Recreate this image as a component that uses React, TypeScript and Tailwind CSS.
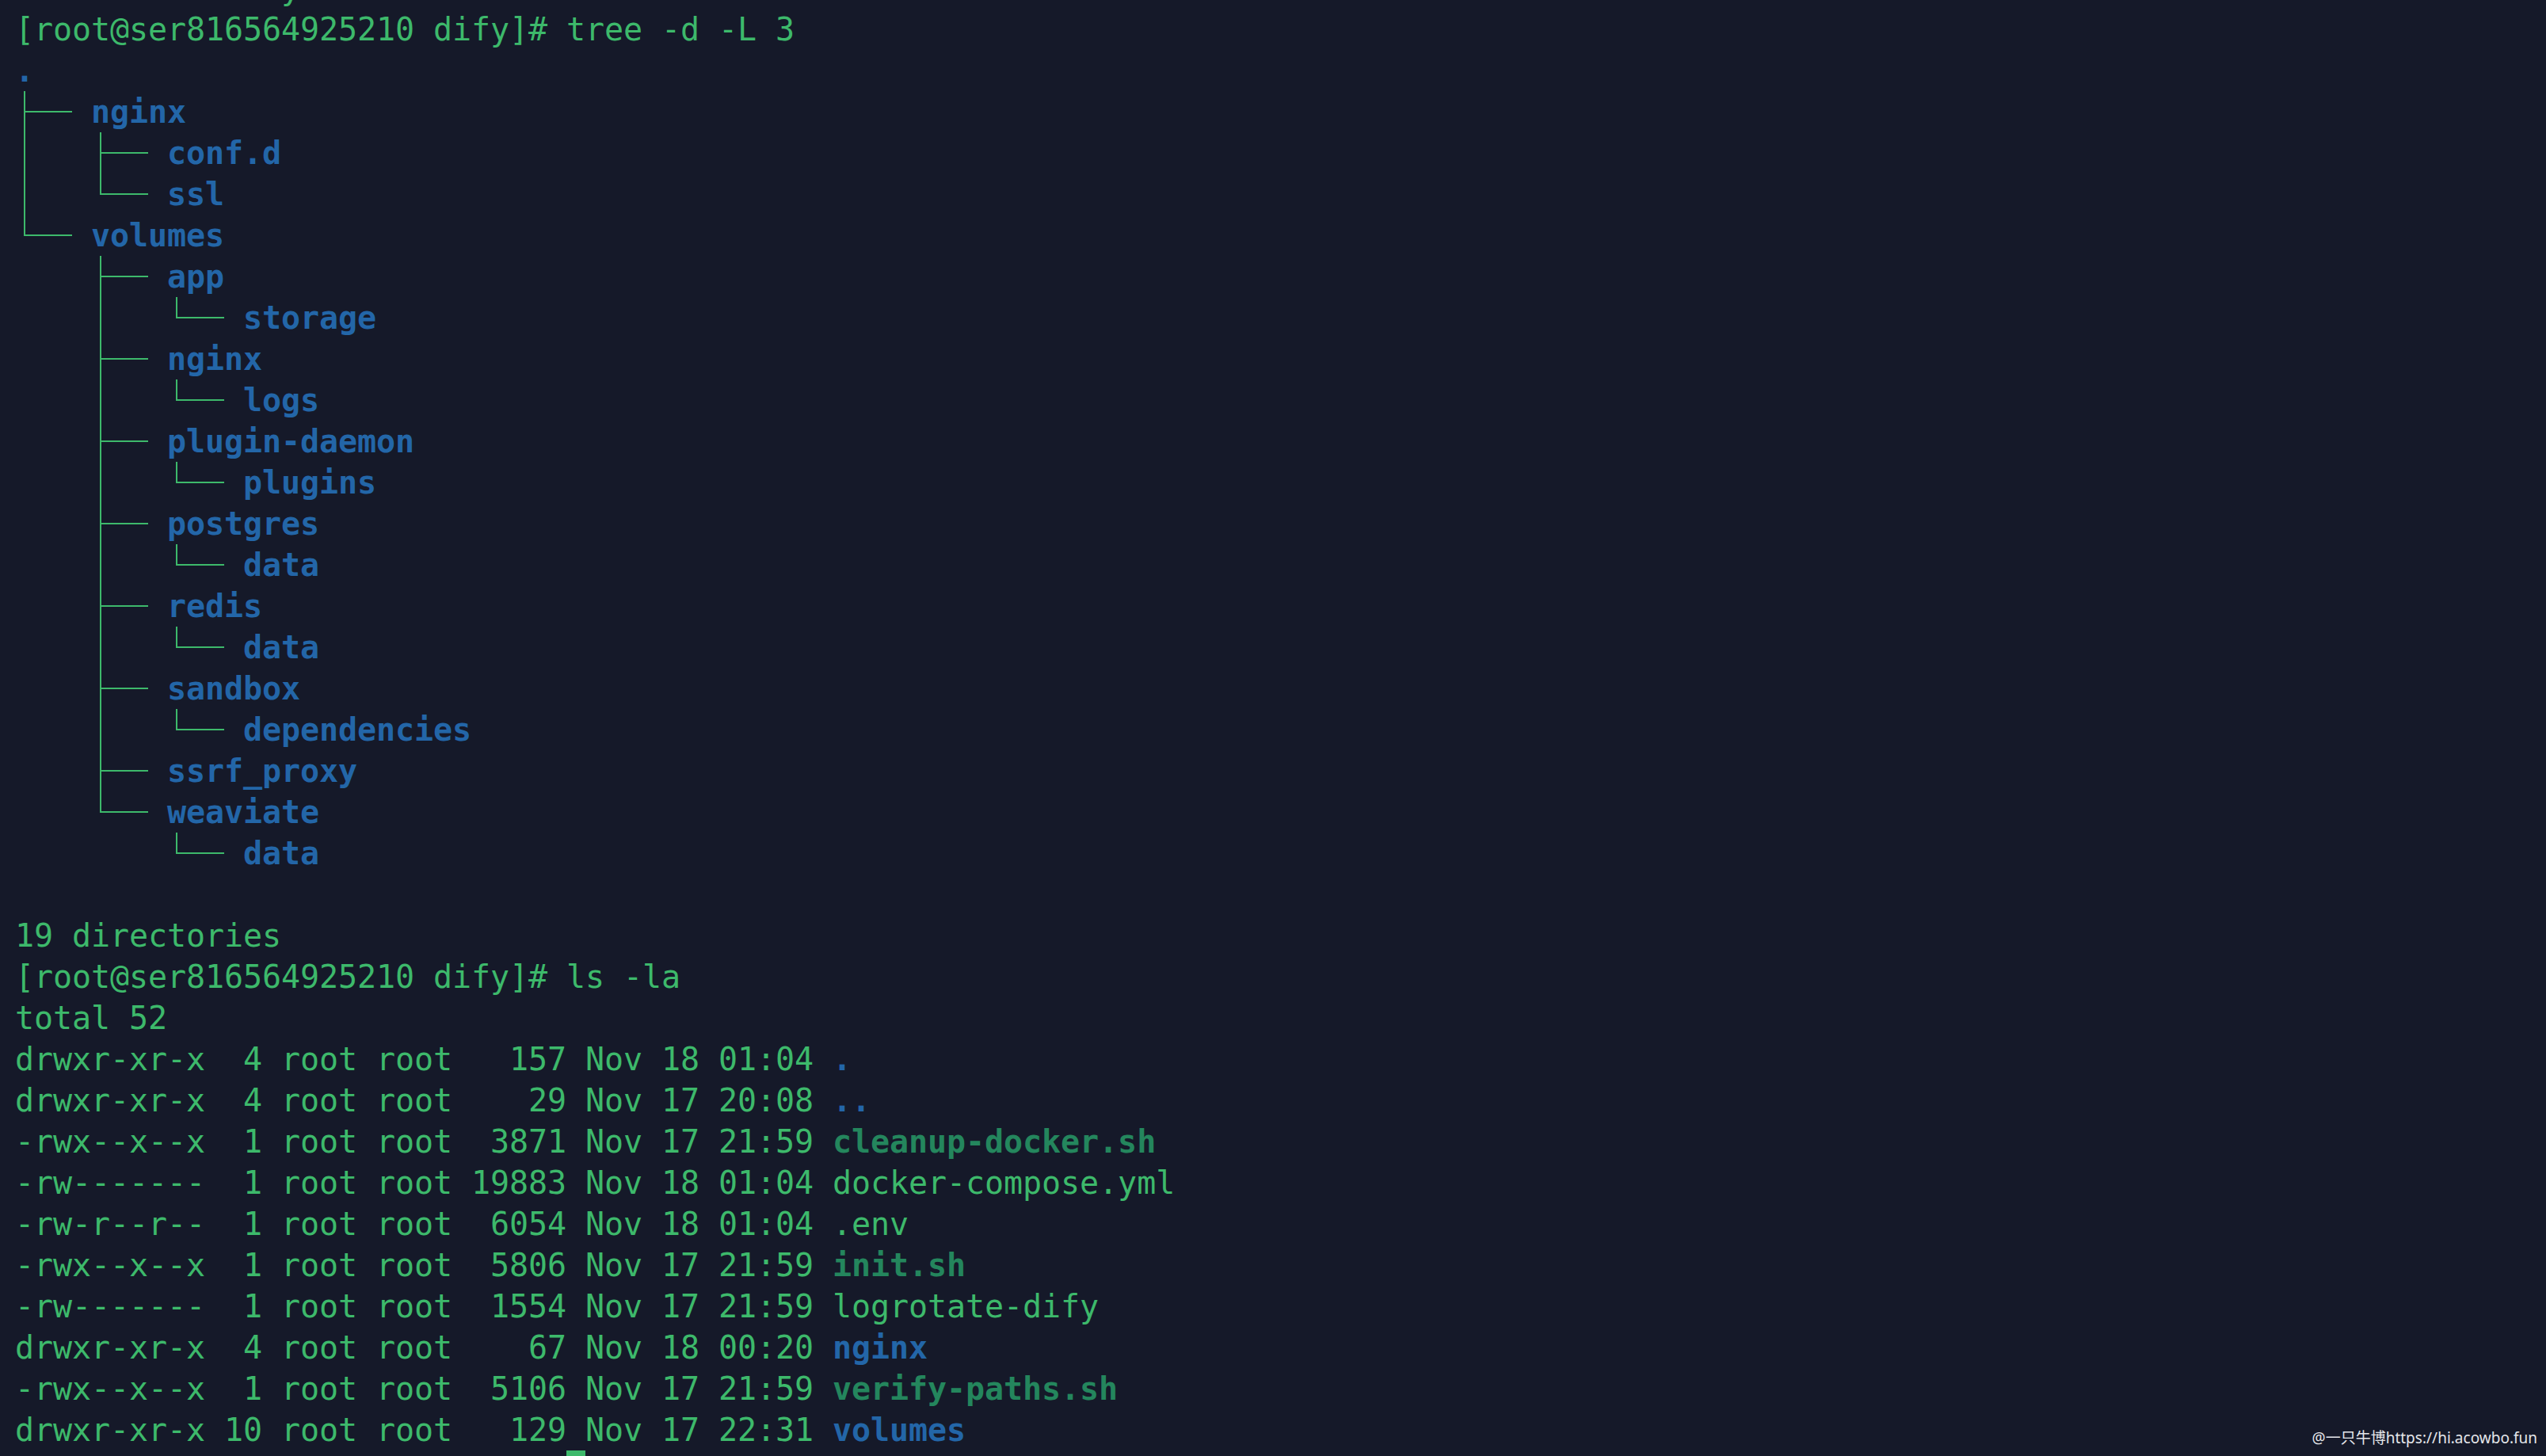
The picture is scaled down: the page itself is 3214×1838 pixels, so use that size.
import React from "react";

type Seg = "pipe" | "tee" | "elbow" | "blank";

const prompt = "[root@ser816564925210 dify]# ";

const tree: { segs: Seg[]; name: string }[] = [
  { segs: ["tee"], name: "nginx" },
  { segs: ["pipe", "tee"], name: "conf.d" },
  { segs: ["pipe", "elbow"], name: "ssl" },
  { segs: ["elbow"], name: "volumes" },
  { segs: ["blank", "tee"], name: "app" },
  { segs: ["blank", "pipe", "elbow"], name: "storage" },
  { segs: ["blank", "tee"], name: "nginx" },
  { segs: ["blank", "pipe", "elbow"], name: "logs" },
  { segs: ["blank", "tee"], name: "plugin-daemon" },
  { segs: ["blank", "pipe", "elbow"], name: "plugins" },
  { segs: ["blank", "tee"], name: "postgres" },
  { segs: ["blank", "pipe", "elbow"], name: "data" },
  { segs: ["blank", "tee"], name: "redis" },
  { segs: ["blank", "pipe", "elbow"], name: "data" },
  { segs: ["blank", "tee"], name: "sandbox" },
  { segs: ["blank", "pipe", "elbow"], name: "dependencies" },
  { segs: ["blank", "tee"], name: "ssrf_proxy" },
  { segs: ["blank", "elbow"], name: "weaviate" },
  { segs: ["blank", "blank", "elbow"], name: "data" },
];

const listing: { info: string; name: string; kind: "dir" | "exe" | "file" }[] = [
  { info: "drwxr-xr-x  4 root root   157 Nov 18 01:04 ", name: ".", kind: "dir" },
  { info: "drwxr-xr-x  4 root root    29 Nov 17 20:08 ", name: "..", kind: "dir" },
  { info: "-rwx--x--x  1 root root  3871 Nov 17 21:59 ", name: "cleanup-docker.sh", kind: "exe" },
  { info: "-rw-------  1 root root 19883 Nov 18 01:04 ", name: "docker-compose.yml", kind: "file" },
  { info: "-rw-r--r--  1 root root  6054 Nov 18 01:04 ", name: ".env", kind: "file" },
  { info: "-rwx--x--x  1 root root  5806 Nov 17 21:59 ", name: "init.sh", kind: "exe" },
  { info: "-rw-------  1 root root  1554 Nov 17 21:59 ", name: "logrotate-dify", kind: "file" },
  { info: "drwxr-xr-x  4 root root    67 Nov 18 00:20 ", name: "nginx", kind: "dir" },
  { info: "-rwx--x--x  1 root root  5106 Nov 17 21:59 ", name: "verify-paths.sh", kind: "exe" },
  { info: "drwxr-xr-x 10 root root   129 Nov 17 22:31 ", name: "volumes", kind: "dir" },
];

const nameClass = {
  dir: "font-bold text-[#2366a8]",
  exe: "font-bold text-[#24865d]",
  file: "text-[#3db96b]",
};

function TreeSeg({ kind }: { kind: Seg }) {
  return (
    <svg width="96" height="52" viewBox="0 0 96 52" className="shrink-0">
      {(kind === "pipe" || kind === "tee") && (
        <line x1="12" y1="0" x2="12" y2="52" stroke="#3db96b" strokeWidth="2" />
      )}
      {kind === "elbow" && (
        <line x1="12" y1="0" x2="12" y2="27" stroke="#3db96b" strokeWidth="2" />
      )}
      {(kind === "tee" || kind === "elbow") && (
        <line x1="11" y1="26" x2="72" y2="26" stroke="#3db96b" strokeWidth="2" />
      )}
    </svg>
  );
}

function Line({ children }: { children?: React.ReactNode }) {
  return (
    <div className="flex h-[52px] items-center whitespace-pre leading-[52px]">{children}</div>
  );
}

export default function App() {
  return (
    <div className="relative h-[1838px] w-full overflow-hidden bg-[#151929]">
      <div
        className="-mt-[41px] pl-[19px] text-[40px] tracking-[-0.08px] text-[#3db96b]"
        style={{ fontFamily: '"DejaVu Sans Mono", "Liberation Mono", monospace' }}
      >
        <Line>Mount directory</Line>
        <Line>{prompt}tree -d -L 3</Line>
        <Line>
          <span className="font-bold text-[#2366a8]">.</span>
        </Line>
        {tree.map((row, i) => (
          <Line key={i}>
            {row.segs.map((s, j) => (
              <TreeSeg key={j} kind={s} />
            ))}
            <span className="font-bold text-[#2366a8]">{row.name}</span>
          </Line>
        ))}
        <Line />
        <Line>19 directories</Line>
        <Line>{prompt}ls -la</Line>
        <Line>total 52</Line>
        {listing.map((r, i) => (
          <Line key={i}>
            {r.info}
            <span className={nameClass[r.kind]}>{r.name}</span>
          </Line>
        ))}
        <Line>
          {prompt}
          <span className="inline-block h-[52px] w-[24px] bg-[#3db96b]" />
        </Line>
      </div>

      {/* watermark */}
      <div
        className="absolute bottom-[9px] right-[11px] text-[19px] text-[#e4e6ea]"
        style={{ fontFamily: '"Noto Sans", "Noto Sans CJK SC", sans-serif' }}
      >
        @一只牛博https://hi.acowbo.fun
      </div>
    </div>
  );
}
